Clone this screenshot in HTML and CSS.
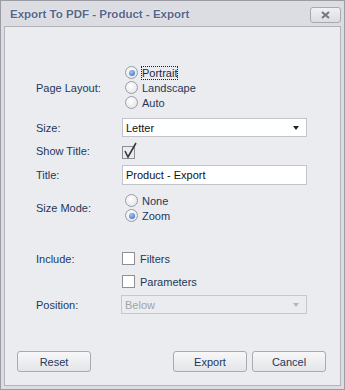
FILE: index.html
```html
<!DOCTYPE html>
<html>
<head>
  <title>Export To PDF</title>
  <link rel="stylesheet" href="styles.css">
</head>
<body>
  <div class="window">
    <div class="titlebar">
      <span class="title">Export To PDF - Product - Export</span>
      <button class="close-btn">
        <svg width="11" height="8" viewBox="0 0 11 8"><path d="M2 1 L9 7 M9 1 L2 7" stroke="#74767f" stroke-width="2"/></svg>
      </button>
    </div>

    <div class="panel">
      <div class="row group-layout">
        <div class="label">Page Layout:</div>
        <div class="radios">
          <div class="radio-item"><span class="radio checked"></span><span class="focused">Portrait</span></div>
          <div class="radio-item"><span class="radio"></span><span>Landscape</span></div>
          <div class="radio-item"><span class="radio"></span><span>Auto</span></div>
        </div>
      </div>

      <div class="row row-size">
        <div class="label">Size:</div>
        <div class="combo">
          <span>Letter</span>
          <span class="arrow"></span>
        </div>
      </div>

      <div class="row row-show">
        <div class="label">Show Title:</div>
        <span class="check checked">
          <svg width="16" height="17" viewBox="0 0 16 17"><path d="M3 9 L6 15 L14 1" fill="none" stroke="#3a3a3a" stroke-width="1.6"/></svg>
        </span>
      </div>

      <div class="row row-title">
        <div class="label">Title:</div>
        <div class="textbox">Product - Export</div>
      </div>

      <div class="row group-mode">
        <div class="label">Size Mode:</div>
        <div class="radios">
          <div class="radio-item"><span class="radio"></span><span>None</span></div>
          <div class="radio-item"><span class="radio checked"></span><span>Zoom</span></div>
        </div>
      </div>

      <div class="row row-include">
        <div class="label">Include:</div>
        <div class="check-item"><span class="check"></span><span>Filters</span></div>
      </div>

      <div class="row row-params">
        <div class="label"></div>
        <div class="check-item"><span class="check"></span><span>Parameters</span></div>
      </div>

      <div class="row row-position">
        <div class="label">Position:</div>
        <div class="combo disabled">
          <span>Below</span>
          <span class="arrow"></span>
        </div>
      </div>

      <div class="buttons">
        <button class="btn">Reset</button>
        <div class="right-buttons">
          <button class="btn">Export</button>
          <button class="btn">Cancel</button>
        </div>
      </div>
    </div>
  </div>
</body>
</html>
```

FILE: styles.css
```css
body {
  margin: 0;
  font-family: 'Liberation Sans', Arial, sans-serif;
  font-size: 11px;
  background: #dcdde3;
}

.window {
  width: 345px;
  height: 390px;
  box-sizing: border-box;
  border: 1px solid #9c9ca4;
  background: #dcdde3;
  padding: 0 3px 3px 3px;
  display: flex;
  flex-direction: column;
}

.titlebar {
  height: 25px;
  display: flex;
  align-items: center;
  justify-content: space-between;
  padding: 0 0 0 6px;
}

.title {
  font-family: 'Liberation Sans', Arial, sans-serif;
  font-weight: bold;
  font-size: 11.5px;
  color: #56678a;
  text-shadow: 0 0 2px rgba(255,255,255,0.9);
  margin-top: 1px;
}

.close-btn {
  width: 31px;
  height: 16px;
  margin-top: 2px;
  border: 1px solid #a8a9b0;
  border-radius: 3px;
  background: linear-gradient(#f0f0f3, #dcdde2);
  padding: 0;
  display: flex;
  align-items: center;
  justify-content: center;
}

.panel {
  flex: 1;
  border: 1px solid #b3b4ba;
  background: #ebecf0;
  padding: 0 33px 0 31px;
  display: flex;
  flex-direction: column;
  color: #22385a;
}

.row {
  display: flex;
  align-items: center;
}

.label {
  width: 86px;
  flex-shrink: 0;
}

.group-layout { margin-top: 38px; }
.row-size { margin-top: 8px; }
.row-show { margin-top: 4px; height: 20px; }
.row-title { margin-top: 4px; }
.group-mode { margin-top: 8px; }
.row-include { margin-top: 29px; }
.row-params { margin-top: 10px; }
.row-position { margin-top: 7px; }

.radios {
  display: flex;
  flex-direction: column;
  padding-left: 3px;
}

.radio-item {
  height: 15px;
  display: flex;
  align-items: center;
  gap: 4px;
}

.radio {
  width: 11px;
  height: 11px;
  border-radius: 50%;
  border: 1px solid #9a9ca4;
  background: radial-gradient(circle at 40% 35%, #ffffff, #dedfe4);
  position: relative;
}

.radio.checked::after {
  content: "";
  position: absolute;
  left: 2.5px;
  top: 2.5px;
  width: 6px;
  height: 6px;
  border-radius: 50%;
  background: radial-gradient(circle at 40% 35%, #a8c4f2, #2a62c9);
}

.focused {
  outline: 1px dotted #222;
  outline-offset: 0;
  color: #1a2a44;
}

.combo {
  width: 185px;
  height: 19px;
  box-sizing: border-box;
  border: 1px solid #c3c4c9;
  background: #fff;
  color: #111;
  display: flex;
  align-items: center;
  justify-content: space-between;
  padding: 0 7px 0 3px;
}

.arrow {
  width: 0;
  height: 0;
  border-left: 3.5px solid transparent;
  border-right: 3.5px solid transparent;
  border-top: 4px solid #222;
}

.combo.disabled {
  background: #ebecf0;
  color: #a2a3a8;
  border-color: #c7c8cc;
  margin-left: -1px;
  width: 186px;
}

.combo.disabled .arrow {
  border-top-color: #b4b5ba;
}

.check {
  width: 11px;
  height: 11px;
  border: 1px solid #8e8f96;
  background: #fff;
  position: relative;
  flex-shrink: 0;
}

.check.checked {
  background: #ebecf0;
  margin-top: 2px;
}

.check svg {
  position: absolute;
  left: -1px;
  top: -5px;
}

.check-item {
  display: flex;
  align-items: center;
  gap: 5px;
  color: #22385a;
}

.textbox {
  width: 185px;
  height: 20px;
  box-sizing: border-box;
  border: 1px solid #c3c4c9;
  background: #fff;
  color: #111;
  padding: 0 3px;
  display: flex;
  align-items: center;
}

.buttons {
  margin-top: auto;
  margin-bottom: 13px;
  margin-left: -19px;
  margin-right: -19px;
  display: flex;
  justify-content: space-between;
}

.right-buttons {
  display: flex;
  gap: 5px;
}

.btn {
  width: 74px;
  height: 21px;
  border: 1px solid #a9aab0;
  border-radius: 3px;
  background: linear-gradient(#f7f7f9, #e4e5e9);
  font-family: 'Liberation Sans', Arial, sans-serif;
  font-size: 11px;
  color: #22385a;
  padding: 0;
}
```
